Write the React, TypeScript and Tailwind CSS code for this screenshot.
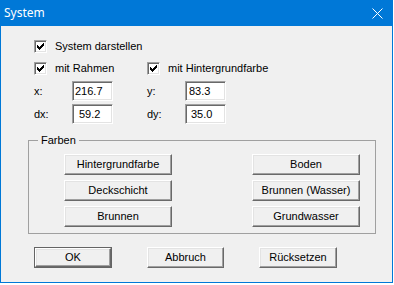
const font = "font-['Liberation_Sans',Arial,sans-serif] text-[11px] text-black"

function Check() {
  // classic 7x7 pixel check mark
  const rows = ['......X', '.....XX', 'X...XXX', 'XX.XXX.', 'XXXXX..', '.XXX...', '..X....']
  return (
    <svg width="7" height="7" shapeRendering="crispEdges">
      {rows.map((r, y) =>
        r.split('').map((c, x) => (c === 'X' ? <rect key={`${x}-${y}`} x={x} y={y} width="1" height="1" fill="#000" /> : null))
      )}
    </svg>
  )
}

function CheckBox({ label }: { label: string }) {
  return (
    <div className="flex h-[13px] items-center">
      <div className="flex h-[13px] w-[13px] items-center justify-center border border-t-[#a0a0a0] border-l-[#a0a0a0] border-r-white border-b-white bg-white shadow-[inset_1px_1px_0_#696969,inset_-1px_-1px_0_#e3e3e3]">
        <Check />
      </div>
      <span className="ml-[8px] leading-[13px]">{label}</span>
    </div>
  )
}

function Field({ label, value, pad }: { label: string; value: string; pad: string }) {
  return (
    <div className="flex h-[20px] items-center">
      <span className="w-[38px] leading-[13px]">{label}</span>
      <div
        className={`flex h-[20px] w-[41px] items-center border border-t-[#a0a0a0] border-l-[#a0a0a0] border-r-white border-b-white bg-white shadow-[inset_1px_1px_0_#696969,inset_-1px_-1px_0_#e3e3e3] ${pad}`}
      >
        {value}
      </div>
    </div>
  )
}

function Button({ label, w, def }: { label: string; w: string; def?: boolean }) {
  const face = (
    <div className="flex h-full w-full items-center justify-center border border-t-white border-l-white border-r-[#696969] border-b-[#696969] bg-[#f0f0f0] shadow-[inset_-1px_-1px_0_#a0a0a0,inset_1px_1px_0_#e3e3e3]">
      {label}
    </div>
  )
  if (def)
    return <div className={`h-[21px] border border-[#646464] ${w}`}>{face}</div>
  return <div className={`h-[21px] ${w}`}>{face}</div>
}

export default function App() {
  return (
    <div className="h-[285px] w-[394px] bg-white">
      <div className="flex h-[283px] w-[393px] flex-col bg-[#0078d7]">
        {/* title bar */}
        <div className="flex h-[26px] items-center justify-between pl-[4px] pr-[10px]">
          <span className="font-['Noto_Sans',sans-serif] text-[12px] text-white">System</span>
          <svg width="11" height="11" viewBox="0 0 11 11">
            <path d="M0.5 0.5 L10.5 10.5 M10.5 0.5 L0.5 10.5" stroke="#fff" strokeWidth="1" />
          </svg>
        </div>

        <div className={`mx-[1px] mb-[1px] flex flex-1 flex-col bg-[#f0f0f0] ${font}`}>
          <div className="ml-[33px] mt-[14px]">
            <CheckBox label="System darstellen" />
          </div>

          <div className="ml-[33px] mt-[9px] flex">
            <div className="w-[113px]">
              <CheckBox label="mit Rahmen" />
            </div>
            <CheckBox label="mit Hintergrundfarbe" />
          </div>

          <div className="ml-[33px] mt-[6px] flex gap-[34px]">
            <Field label="x:" value="216.7" pad="pl-[2px]" />
            <Field label="y:" value="83.3" pad="pl-[3px]" />
          </div>
          <div className="ml-[33px] mt-[3px] flex gap-[34px]">
            <Field label="dx:" value="59.2" pad="pl-[6px]" />
            <Field label="dy:" value="35.0" pad="pl-[5px]" />
          </div>

          <fieldset className="ml-[27px] mt-[10px] h-[100px] w-[348px] border border-[#a0a0a0] p-0">
            <legend className="ml-[9px] px-[3px] leading-[13px]">Farben</legend>
            <div className="flex justify-between pl-[35px] pr-[15px] pt-[7px]">
              <div className="flex flex-col gap-[5px]">
                <Button label="Hintergrundfarbe" w="w-[108px]" />
                <Button label="Deckschicht" w="w-[108px]" />
                <Button label="Brunnen" w="w-[108px]" />
              </div>
              <div className="flex flex-col gap-[5px]">
                <Button label="Boden" w="w-[108px]" />
                <Button label="Brunnen (Wasser)" w="w-[108px]" />
                <Button label="Grundwasser" w="w-[108px]" />
              </div>
            </div>
          </fieldset>

          <div className="ml-[33px] mt-[13px] flex">
            <Button label="OK" w="w-[78px]" def />
            <div className="ml-[35px]">
              <Button label="Abbruch" w="w-[77px]" />
            </div>
            <div className="ml-[35px]">
              <Button label="Rücksetzen" w="w-[78px]" />
            </div>
          </div>
        </div>
      </div>
    </div>
  )
}
